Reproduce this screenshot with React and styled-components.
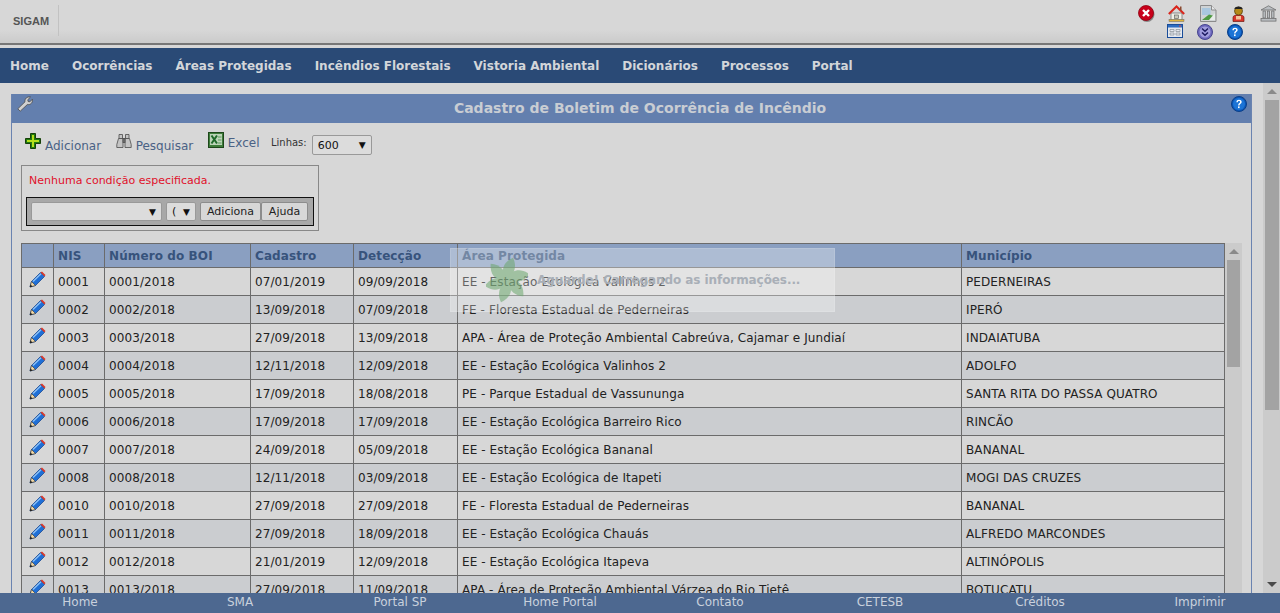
import React from 'react';
import styled, { createGlobalStyle } from 'styled-components';

const rows = [
  ['0001', '0001/2018', '07/01/2019', '09/09/2018', 'EE - Estação Ecológica Valinhos 2', 'PEDERNEIRAS'],
  ['0002', '0002/2018', '13/09/2018', '07/09/2018', 'FE - Floresta Estadual de Pederneiras', 'IPERÓ'],
  ['0003', '0003/2018', '27/09/2018', '13/09/2018', 'APA - Área de Proteção Ambiental Cabreúva, Cajamar e Jundiaí', 'INDAIATUBA'],
  ['0004', '0004/2018', '12/11/2018', '12/09/2018', 'EE - Estação Ecológica Valinhos 2', 'ADOLFO'],
  ['0005', '0005/2018', '17/09/2018', '18/08/2018', 'PE - Parque Estadual de Vassununga', 'SANTA RITA DO PASSA QUATRO'],
  ['0006', '0006/2018', '17/09/2018', '17/09/2018', 'EE - Estação Ecológica Barreiro Rico', 'RINCÃO'],
  ['0007', '0007/2018', '24/09/2018', '05/09/2018', 'EE - Estação Ecológica Bananal', 'BANANAL'],
  ['0008', '0008/2018', '12/11/2018', '03/09/2018', 'EE - Estação Ecológica de Itapeti', 'MOGI DAS CRUZES'],
  ['0010', '0010/2018', '27/09/2018', '27/09/2018', 'FE - Floresta Estadual de Pederneiras', 'BANANAL'],
  ['0011', '0011/2018', '27/09/2018', '18/09/2018', 'EE - Estação Ecológica Chauás', 'ALFREDO MARCONDES'],
  ['0012', '0012/2018', '21/01/2019', '12/09/2018', 'EE - Estação Ecológica Itapeva', 'ALTINÓPOLIS'],
  ['0013', '0013/2018', '27/09/2018', '11/09/2018', 'APA - Área de Proteção Ambiental Várzea do Rio Tietê', 'BOTUCATU'],
];

const menu = ['Home', 'Ocorrências', 'Áreas Protegidas', 'Incêndios Florestais', 'Vistoria Ambiental', 'Dicionários', 'Processos', 'Portal'];
const links = ['Home', 'SMA', 'Portal SP', 'Home Portal', 'Contato', 'CETESB', 'Créditos', 'Imprimir'];
const columns = [32, 51, 146, 103, 104, 504, 263];

const GlobalStyle = createGlobalStyle`
  html, body { margin: 0; height: 100%; overflow: hidden; background: #d7d7d7; }
  body { font-family: "DejaVu Sans", Verdana, sans-serif; font-size: 12px; }
  #root { height: 100%; }
`;

const Page = styled.div`
  height: 100vh;
  display: flex;
  flex-direction: column;
`;

const Header = styled.header`
  flex: none;
  height: 45px;
  box-sizing: border-box;
  display: flex;
  justify-content: space-between;
  padding: 5px 0 0 13px;
  background: linear-gradient(#d7d7d7 0, #d7d7d7 30px, #c9c9c9 45px);
  border-bottom: 2px solid #777;
  box-shadow: 0 1px 0 #d7d7d7;
`;

const Brand = styled.div`
  width: 45px;
  height: 31px;
  display: flex;
  align-items: center;
  border-right: 1px solid #c2c2c2;
  font: bold 11px "Liberation Sans", Arial, sans-serif;
  color: #555;
`;

const IconStack = styled.div`
  display: flex;
  flex-direction: column;
  align-items: flex-end;
`;

const TopIcons = styled.div`
  height: 20px;
  display: flex;
  gap: 13px;
  padding-right: 3px;
  svg:nth-child(2) { margin-right: 2px; }
`;

const BottomIcons = styled.div`
  height: 20px;
  display: flex;
  gap: 14px;
  padding-right: 37px;
`;

const Nav = styled.nav`
  flex: none;
  margin-top: 3px;
  height: 35px;
  display: flex;
  align-items: center;
  gap: 23px;
  padding-left: 10px;
  background: #2a4a76;
  color: #d3d6da;
  font: bold 12px "DejaVu Sans", Verdana, sans-serif;
`;

const Body = styled.div`
  flex: 1;
  min-height: 0;
  display: flex;
  overflow: hidden;
`;

const Main = styled.main`
  flex: 1;
  min-width: 0;
  padding: 11px 11px 0;
`;

const PageBar = styled.div`
  flex: none;
  width: 17px;
  box-sizing: border-box;
  padding: 6px 1px 6px 2px;
  background: #cbcbcb;
  display: flex;
  flex-direction: column;
  align-items: center;
`;

const Arrow = styled.span`
  flex: none;
  width: 0;
  height: 0;
  border-left: 5px solid transparent;
  border-right: 5px solid transparent;
  ${p => (p.$down ? 'border-top: 5px solid #4a4a4a;' : 'border-bottom: 5px solid #8a8a8a;')}
`;

const Thumb = styled.div`
  flex: none;
  align-self: stretch;
  height: ${p => p.$size}px;
  margin-top: 6px;
  background: #a3a3a3;
`;

const BarSpace = styled.div`
  flex: 1;
`;

const Panel = styled.section`
  height: 100%;
  box-sizing: border-box;
  border-left: 1px solid #6a83b0;
  border-right: 1px solid #6a83b0;
  display: flex;
  flex-direction: column;
`;

const TitleBar = styled.div`
  flex: none;
  height: 29px;
  box-sizing: border-box;
  padding: 0 4px 0 5px;
  background: #637fae;
  display: flex;
  align-items: flex-start;
  svg { flex: none; margin-top: 2px; }
`;

const TitleText = styled.h1`
  flex: 1;
  margin: 0 0 0 16px;
  text-align: center;
  color: #c9cdd3;
  font: bold 14px/28px "DejaVu Sans", Verdana, sans-serif;
`;

const PanelBody = styled.div`
  flex: 1;
  min-height: 0;
  padding: 9px 9px 0;
`;

const Toolbar = styled.div`
  display: flex;
  align-items: flex-start;
  height: 33px;
  padding-left: 4px;
`;

const ToolLink = styled.a`
  display: flex;
  align-items: flex-start;
  gap: 4px;
  margin-right: 14.5px;
  color: #4a6285;
  font-size: 12px;
  line-height: 14px;
  svg { margin-top: ${p => p.$iconTop ?? 1}px; }
  span { padding-top: ${p => p.$textTop ?? 7}px; }
`;

const LinesLabel = styled.span`
  margin: 4px 5px 0 -3px;
  font-size: 10px;
  line-height: 14px;
  color: #333;
`;

const FakeSelect = styled.div`
  box-sizing: border-box;
  flex: none;
  width: ${p => p.$w}px;
  height: ${p => p.$h ?? 20}px;
  margin: ${p => p.$top ?? 0}px ${p => p.$mx ?? 0}px 0;
  padding: 0 5px;
  display: flex;
  align-items: center;
  border: 1px solid #999;
  border-radius: 2px;
  background: #dcdcdc;
  color: #111;
  font-size: 11px;
  &::after { content: '▼'; margin-left: auto; font-size: 9px; }
`;

const FilterBox = styled.div`
  box-sizing: border-box;
  width: 298px;
  height: 66px;
  padding: 8px 4px 0;
  border: 1px solid #888;
`;

const FilterMessage = styled.div`
  padding-left: 3px;
  height: 23px;
  color: #e0102a;
  font-size: 11px;
  line-height: 14px;
`;

const FilterBar = styled.div`
  box-sizing: border-box;
  height: 29px;
  display: flex;
  align-items: center;
  padding: 0 4px;
  border: 1px solid #111;
  background: #a8a8a8;
`;

const FilterButton = styled.button`
  box-sizing: border-box;
  flex: none;
  height: 19px;
  padding: 0;
  width: ${p => p.$w}px;
  border: 1px solid #8c8c8c;
  border-radius: 2px;
  background: #d7d7d7;
  color: #222;
  font: 11px "DejaVu Sans", Verdana, sans-serif;
`;

const TableArea = styled.div`
  position: relative;
  margin-top: 12px;
  display: flex;
`;

const Grid = styled.table`
  flex: none;
  width: 1204px;
  table-layout: fixed;
  border-collapse: collapse;
  color: #222;
  font-size: 12px;
  letter-spacing: 0.1px;
`;

const HeadCell = styled.th`
  height: 23px;
  padding: 0 4px;
  border: 1px solid #6b6b6b;
  background: #8a9fc1;
  color: #37537c;
  font-weight: bold;
  font-size: 12px;
  text-align: left;
`;

const Row = styled.tr`
  background: ${p => (p.$alt ? '#cbcdd0' : '#d7d7d7')};
`;

const Cell = styled.td`
  height: 27px;
  padding: 0 4px;
  border: 1px solid #6b6b6b;
  white-space: nowrap;
  overflow: hidden;
`;

const EditCell = styled(Cell)`
  padding: 0 0 0 7px;
  svg { display: block; margin-top: -4px; }
`;

const TableBar = styled.div`
  flex: none;
  width: 17px;
  box-sizing: border-box;
  padding: 6px 2px 0;
  background: #cbcbcb;
  display: flex;
  flex-direction: column;
  align-items: center;
`;

const LoadingBox = styled.div`
  position: absolute;
  left: 429px;
  top: 5px;
  width: 385px;
  height: 64px;
  box-sizing: border-box;
  display: flex;
  align-items: center;
  padding-left: 35px;
  gap: 9px;
  background: rgba(255, 255, 255, 0.3);
  border: 1px solid rgba(255, 255, 255, 0.12);
  color: #a9afb7;
  font-size: 12px;
  font-weight: bold;
  letter-spacing: -0.08px;
  span { margin-top: -1px; }
`;

const Footer = styled.footer`
  flex: none;
  height: 20px;
  display: grid;
  grid-template-columns: repeat(8, 1fr);
  background: #4d6890;
  color: #c9d1dd;
  font-size: 12px;
  line-height: 19px;
  text-align: center;
`;

const HelpIcon = ({ size = 16 }) => (
  <svg width={size} height={size} viewBox="0 0 16 16">
    <circle cx="8" cy="8" r="7.5" fill="#0b57b8" stroke="#0a3f88" />
    <circle cx="8" cy="8" r="6" fill="#1c74d6" />
    <path d="M5.4 6.2C5.4 4.6 6.6 3.8 8 3.8s2.7.8 2.7 2.2c0 1.900-2.200 1.900-2.200 3.500H7.100c0-2.300 2-2.300 2-3.400 0-.6-.5-1-1.100-1-.7 0-1.100.5-1.100 1.100z" fill="#fff" />
    <rect x="7" y="10.400" width="1.600" height="1.700" fill="#fff" />
  </svg>
);

const CloseIcon = () => (
  <svg width="17" height="17" viewBox="0 0 17 17">
    <circle cx="9" cy="9.500" r="7.500" fill="#888" />
    <circle cx="8" cy="8" r="7.500" fill="#c8001a" stroke="#8f0010" strokeWidth="0.800" />
    <path d="M5 5l6 6M11 5l-6 6" stroke="#fff" strokeWidth="2.400" />
  </svg>
);

const HomeIcon = () => (
  <svg width="17" height="17" viewBox="0 0 17 17">
    <rect x="3" y="8" width="11" height="7" fill="#efefe6" stroke="#666" strokeWidth="0.700" />
    <rect x="1" y="14.500" width="15" height="2" fill="#e0b43a" stroke="#555" strokeWidth="0.400" />
    <path d="M0.800 9L8.500 1.500 16.200 9" fill="none" stroke="#d9261c" strokeWidth="2" />
    <rect x="12" y="1.500" width="1.500" height="4" fill="#8a4a30" />
    <rect x="6.500" y="10" width="4" height="3.500" fill="#c9c9bb" stroke="#555" strokeWidth="0.600" />
  </svg>
);

const BrokenImageIcon = () => (
  <svg width="17" height="17" viewBox="0 0 17 17">
    <path d="M0.500 0.500H11.500L16 5V16.500H0.500z" fill="#cfd3d5" stroke="#8b8b8b" />
    <path d="M11.500 0.500V5H16" fill="#e8e8e8" stroke="#8b8b8b" />
    <rect x="2" y="3" width="8.500" height="7" fill="#a9c7de" />
    <path d="M2 15L9 9.500 14 11V15z" fill="#4f9a41" />
    <path d="M9 15L15 8V15z" fill="#e7ebe9" />
  </svg>
);

const PersonIcon = () => (
  <svg width="17" height="17" viewBox="0 0 17 17">
    <path d="M3 16.500V12.500C3 10.500 5.500 10 8.500 10s5.500.5 5.500 2.500v4z" fill="#d9342a" stroke="#6d1a12" strokeWidth="0.700" />
    <rect x="6" y="11" width="5" height="3.500" fill="#f2c39c" />
    <circle cx="8.500" cy="6" r="4" fill="#b58a17" stroke="#4f3b08" strokeWidth="0.700" />
    <path d="M4.300 4C5.500 .8 11.500 .8 12.700 4z" fill="#222" />
  </svg>
);

const BankIcon = () => (
  <svg width="17" height="17" viewBox="0 0 17 17" fill="#b9bdc1" stroke="#666" strokeWidth="0.700">
    <path d="M8.500 0.800L16 5H1z" />
    <rect x="3" y="6" width="2.300" height="7" />
    <rect x="7.300" y="6" width="2.300" height="7" />
    <rect x="11.700" y="6" width="2.300" height="7" />
    <rect x="1" y="13.500" width="15" height="2.600" />
  </svg>
);

const WindowIcon = () => (
  <svg width="16" height="14" viewBox="0 0 16 14">
    <rect x="0.500" y="0.500" width="15" height="13" fill="#e4e8ee" stroke="#1a4d99" />
    <rect x="1" y="1" width="14" height="2.500" fill="#2e6dc1" />
    <rect x="12" y="1.500" width="2" height="1" fill="#e0443a" />
    <path d="M3 5.500h4v2H3zM9 5.500h4v2H9zM3 9h4v2H3zM9 9h4v2H9z" fill="none" stroke="#8a9098" strokeWidth="0.700" />
  </svg>
);

const ChevronsIcon = () => (
  <svg width="16" height="16" viewBox="0 0 16 16">
    <circle cx="8" cy="8" r="7.500" fill="#6d68bd" stroke="#47458f" />
    <circle cx="8" cy="8" r="5.500" fill="#a19ddd" />
    <path d="M5 4.500L8 7.200l3-2.700M5 8.500l3 2.700 3-2.700" fill="none" stroke="#1c1a60" strokeWidth="1.500" />
  </svg>
);

const WrenchIcon = () => (
  <svg width="16" height="16" viewBox="0 0 16 16">
    <path d="M0.800 12.800L8 5.800C7.500 2.800 10 0.300 13.500 1L10.800 3.700l.3 1.800 1.800.3 2.500-2.600c.6 3.400-2 6-5 5.300L3.200 15.200z" fill="#d0d0d0" stroke="#4a4a4a" strokeWidth="0.800" />
  </svg>
);

const PlusIcon = () => (
  <svg width="16" height="16" viewBox="0 0 16 16">
    <path d="M5.500 0.500h5v5h5v5h-5v5h-5v-5h-5v-5h5z" fill="#1f7a10" stroke="#174008" />
    <path d="M7 2h2v5h5v2H9v5H7V9H2V7h5z" fill="#b5e01c" />
  </svg>
);

const BinocularsIcon = () => (
  <svg width="16" height="16" viewBox="0 0 16 16" fill="#c4c4c4" stroke="#4b4b4b" strokeWidth="0.800">
    <path d="M3 1.500h3.500v4H3zM9.500 1.500H13v4H9.500z" />
    <path d="M2.500 5.500H7v9H0.800v-3zM9 5.500h4.500l1.700 6v3H9z" />
    <rect x="7" y="5.500" width="2" height="4" fill="#777" />
  </svg>
);

const ExcelIcon = () => (
  <svg width="16" height="16" viewBox="0 0 16 16">
    <rect x="0.500" y="0.500" width="15" height="15" fill="#3e7d3a" stroke="#1d471a" />
    <rect x="2" y="2" width="12" height="11" fill="#bcd4b8" />
    <path d="M3.500 3.500l5.500 8M9 3.500l-5.500 8" stroke="#1f6a2a" strokeWidth="2" />
    <path d="M10 5h3.500M10 8h3.500M10 11h3.500" stroke="#5a9a5a" />
  </svg>
);

const PencilIcon = () => (
  <svg width="17" height="17" viewBox="0 0 17 17">
    <path d="M1 16L2.500 10.500 11.500 1.500 15.500 5.500 6.500 14.500z" fill="#1f6fd6" stroke="#123f86" strokeWidth="0.700" />
    <path d="M4 10.500L12 2.800" stroke="#8fc3f5" strokeWidth="1.300" />
    <path d="M11.500 1.500L13 0.500 16.500 4 15.500 5.500z" fill="#d83a2e" />
    <path d="M1 16L2.500 10.500 6.500 14.500z" fill="#f0d6a4" stroke="#333" strokeWidth="0.600" />
    <path d="M1 16l.6-2.400 1.800 1.800z" fill="#111" />
  </svg>
);

const LeafLogo = () => (
  <svg width="42" height="46" viewBox="0 0 42 46" fill="#6aa66c" opacity="0.550">
    {[10, 70, 130, 190, 250, 310].map(angle => (
      <path key={angle} d="M21 23C13 17 13 7 23 0c6 8 4 17-2 23z" transform={`rotate(${angle} 21 23)`} />
    ))}
  </svg>
);

export default function App() {
  return (
    <Page>
      <GlobalStyle />
      <Header>
        <Brand>SIGAM</Brand>
        <IconStack>
          <TopIcons>
            <CloseIcon />
            <HomeIcon />
            <BrokenImageIcon />
            <PersonIcon />
            <BankIcon />
          </TopIcons>
          <BottomIcons>
            <WindowIcon />
            <ChevronsIcon />
            <HelpIcon />
          </BottomIcons>
        </IconStack>
      </Header>
      <Nav>
        {menu.map(item => <span key={item}>{item}</span>)}
      </Nav>
      <Body>
        <Main>
          <Panel>
            <TitleBar>
              <WrenchIcon />
              <TitleText>Cadastro de Boletim de Ocorrência de Incêndio</TitleText>
              <HelpIcon />
            </TitleBar>
            <PanelBody>
              <Toolbar>
                <ToolLink><PlusIcon /><span>Adicionar</span></ToolLink>
                <ToolLink><BinocularsIcon /><span>Pesquisar</span></ToolLink>
                <ToolLink $iconTop={0} $textTop={4}><ExcelIcon /><span>Excel</span></ToolLink>
                <LinesLabel>Linhas:</LinesLabel>
                <FakeSelect $w={60} $top={3}>600</FakeSelect>
              </Toolbar>
              <FilterBox>
                <FilterMessage>Nenhuma condição especificada.</FilterMessage>
                <FilterBar>
                  <FakeSelect $w={131} $h={19} />
                  <FakeSelect $w={30} $h={19} $mx={4}>(</FakeSelect>
                  <FilterButton $w={61}>Adiciona</FilterButton>
                  <FilterButton $w={47}>Ajuda</FilterButton>
                </FilterBar>
              </FilterBox>
              <TableArea>
                <Grid>
                  <colgroup>
                    {columns.map((w, i) => <col key={i} width={w} />)}
                  </colgroup>
                  <thead>
                    <tr>
                      <HeadCell />
                      <HeadCell>NIS</HeadCell>
                      <HeadCell>Número do BOI</HeadCell>
                      <HeadCell>Cadastro</HeadCell>
                      <HeadCell>Detecção</HeadCell>
                      <HeadCell>Área Protegida</HeadCell>
                      <HeadCell>Município</HeadCell>
                    </tr>
                  </thead>
                  <tbody>
                    {rows.map((row, i) => (
                      <Row key={row[0]} $alt={i % 2 === 1}>
                        <EditCell><PencilIcon /></EditCell>
                        {row.map((text, j) => <Cell key={j}>{text}</Cell>)}
                      </Row>
                    ))}
                  </tbody>
                </Grid>
                <TableBar>
                  <Arrow />
                  <Thumb $size={107} />
                </TableBar>
                <LoadingBox>
                  <LeafLogo />
                  <span>Aguarde! Carregando as informações...</span>
                </LoadingBox>
              </TableArea>
            </PanelBody>
          </Panel>
        </Main>
        <PageBar>
          <Arrow />
          <Thumb $size={310} />
          <BarSpace />
          <Arrow $down />
        </PageBar>
      </Body>
      <Footer>
        {links.map(link => <span key={link}>{link}</span>)}
      </Footer>
    </Page>
  );
}
